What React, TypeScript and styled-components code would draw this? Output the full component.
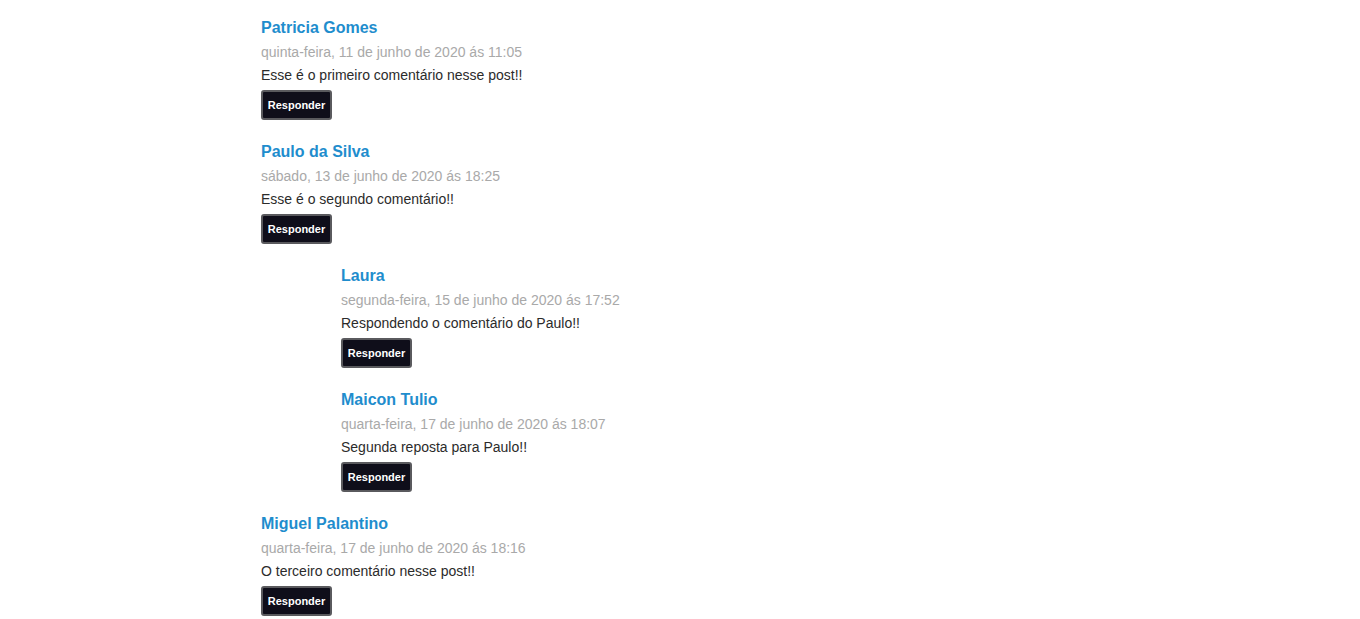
import React from "react";
import styled, { createGlobalStyle } from "styled-components";

const Global = createGlobalStyle`
  body {
    margin: 0;
    background: #ffffff;
    font-family: "Liberation Sans", Arial, sans-serif;
  }
`;

const Page = styled.main`
  padding: 15px 0 0 261px;
  display: flex;
  flex-direction: column;
`;

const Comment = styled.article<{ $depth: number }>`
  display: flex;
  flex-direction: column;
  align-items: flex-start;
  margin-left: ${(p) => p.$depth * 80}px;
  margin-bottom: 19px;
`;

const Name = styled.h3`
  margin: 0;
  font-size: 16px;
  font-weight: bold;
  line-height: 26px;
  color: #1f8dcd;
`;

const DateLine = styled.div`
  font-size: 14px;
  line-height: 23px;
  color: #a9a9a9;
`;

const Body = styled.p`
  margin: 0 0 3px;
  font-size: 14px;
  line-height: 23px;
  color: #2b2b2b;
`;

const ReplyButton = styled.button`
  box-sizing: border-box;
  width: 71px;
  height: 30px;
  padding: 0;
  background: #0f0e1a;
  border: 2px solid #5a5a5e;
  border-radius: 3px;
  color: #ffffff;
  font-family: "Liberation Sans", Arial, sans-serif;
  font-size: 11px;
  font-weight: bold;
  cursor: pointer;
`;

type Item = { name: string; date: string; text: string; depth: number };

const items: Item[] = [
  { name: "Patricia Gomes", date: "quinta-feira, 11 de junho de 2020 ás 11:05", text: "Esse é o primeiro comentário nesse post!!", depth: 0 },
  { name: "Paulo da Silva", date: "sábado, 13 de junho de 2020 ás 18:25", text: "Esse é o segundo comentário!!", depth: 0 },
  { name: "Laura", date: "segunda-feira, 15 de junho de 2020 ás 17:52", text: "Respondendo o comentário do Paulo!!", depth: 1 },
  { name: "Maicon Tulio", date: "quarta-feira, 17 de junho de 2020 ás 18:07", text: "Segunda reposta para Paulo!!", depth: 1 },
  { name: "Miguel Palantino", date: "quarta-feira, 17 de junho de 2020 ás 18:16", text: "O terceiro comentário nesse post!!", depth: 0 },
];

export default function App() {
  return (
    <>
      <Global />
      <Page>
        {items.map((c) => (
          <Comment key={c.name} $depth={c.depth}>
            <Name>{c.name}</Name>
            <DateLine>{c.date}</DateLine>
            <Body>{c.text}</Body>
            <ReplyButton>Responder</ReplyButton>
          </Comment>
        ))}
      </Page>
    </>
  );
}
